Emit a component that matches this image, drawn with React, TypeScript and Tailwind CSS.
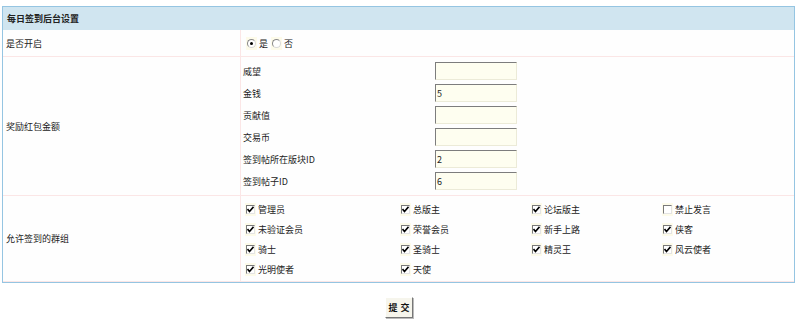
import React from "react";

const fields: { label: string; value: string }[] = [
  { label: "威望", value: "" },
  { label: "金钱", value: "5" },
  { label: "贡献值", value: "" },
  { label: "交易币", value: "" },
  { label: "签到帖所在版块ID", value: "2" },
  { label: "签到帖子ID", value: "6" },
];

const groups: { name: string; on: boolean }[] = [
  { name: "管理员", on: true },
  { name: "总版主", on: true },
  { name: "论坛版主", on: true },
  { name: "禁止发言", on: false },
  { name: "未验证会员", on: true },
  { name: "荣誉会员", on: true },
  { name: "新手上路", on: true },
  { name: "侠客", on: true },
  { name: "骑士", on: true },
  { name: "圣骑士", on: true },
  { name: "精灵王", on: true },
  { name: "风云使者", on: true },
  { name: "光明使者", on: true },
  { name: "天使", on: true },
];

function Radio({ checked }: { checked: boolean }) {
  return (
    <span className="inline-flex items-center justify-center w-[11px] h-[13px] bg-[#fdfbea]">
      <span className="flex items-center justify-center w-[9px] h-[9px] rounded-full border border-[#8a8a8a] border-b-[#d8d8d8] border-r-[#d8d8d8] bg-white">
        {checked && <span className="w-[3px] h-[3px] rounded-full bg-black" />}
      </span>
    </span>
  );
}

function Check({ checked }: { checked: boolean }) {
  return (
    <span className="inline-flex items-center justify-center w-[11px] h-[13px] bg-[#fdfbea]">
      <span className="flex items-center justify-center w-[9px] h-[9px] border border-[#7a7a7a] border-b-[#e4e4e4] border-r-[#e4e4e4] bg-white">
        {checked && (
          <svg width="7" height="7" viewBox="0 0 7 7">
            <path d="M0.5 3 L2.5 5.5 L6.5 0.8" stroke="#000" strokeWidth="1.6" fill="none" />
          </svg>
        )}
      </span>
    </span>
  );
}

export default function App() {
  return (
    <div className="w-[798px] h-[324px] bg-white text-[#222] text-[9px] leading-none font-['Noto_Sans_CJK_SC',sans-serif] overflow-hidden">
      <div className="ml-[2px] mt-[6px] w-[793px] border border-[#95c5e2]">
        {/* header */}
        <div className="h-[23px] bg-[#d0e5f0] flex items-center pl-[4px] font-bold text-[9px]">
          每日签到后台设置
        </div>

        {/* 是否开启 */}
        <div className="flex h-[26px] bg-[#fefefe]">
          <div className="w-[238px] border-r border-[#fbe6e6] flex items-center pl-[3px]">是否开启</div>
          <div className="flex items-center pl-[5px] gap-[2px]">
            <Radio checked />
            <span className="mr-[1px]">是</span>
            <Radio checked={false} />
            <span>否</span>
          </div>
        </div>

        {/* 奖励红包金额 */}
        <div className="flex border-t border-[#fbe6e6] bg-[#fefefe]">
          <div className="w-[238px] border-r border-[#fbe6e6] flex items-center pl-[3px]">奖励红包金额</div>
          <div className="flex flex-col gap-[4px] pt-[5px] pb-[5px] pl-[2px]">
            {fields.map((f) => (
              <div key={f.label} className="flex items-center h-[18px]">
                <span className="w-[192px]">{f.label}</span>
                <span className="w-[82px] h-[18px] flex items-center pl-[1px] bg-[#fefef0] border border-t-[#7d7d7d] border-l-[#7d7d7d] border-b-[#ecebd8] border-r-[#ecebd8] text-[9px]">
                  {f.value}
                </span>
              </div>
            ))}
          </div>
        </div>

        {/* 允许签到的群组 */}
        <div className="flex border-t border-[#fbe6e6] bg-[#fefefe]">
          <div className="w-[238px] border-r border-[#fbe6e6] flex items-center pl-[3px]">允许签到的群组</div>
          <div className="grid grid-cols-[155px_131px_131px_120px] auto-rows-[20px] pt-[3px] pb-[2px] pl-[4px]">
            {groups.map((g) => (
              <div key={g.name} className="flex items-center gap-[2px]">
                <Check checked={g.on} />
                <span>{g.name}</span>
              </div>
            ))}
          </div>
        </div>
        <div className="h-[1px] bg-[#fbe6e6]" />
      </div>

      <div className="flex justify-center mt-[14px]">
        <button className="w-[28px] h-[21px] flex items-center justify-center gap-[3px] bg-[#f6f5ec] border border-t-[#fff] border-l-[#fff] border-b-[#777] border-r-[#777] shadow-[1px_1px_0_#bbb] text-[9px] font-bold text-[#111]">
          <span>提</span>
          <span>交</span>
        </button>
      </div>
    </div>
  );
}
